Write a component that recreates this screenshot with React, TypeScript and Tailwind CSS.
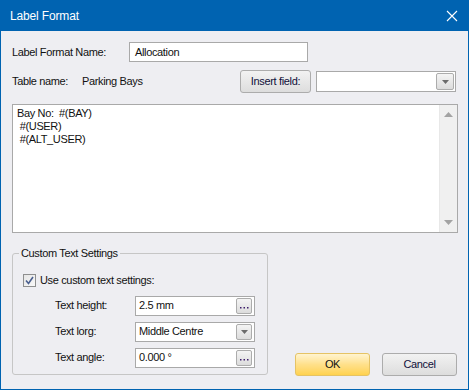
import React from 'react'

const font = { fontFamily: '"Liberation Sans", Arial, sans-serif' }

function CloseIcon() {
  return (
    <svg width="12" height="12" viewBox="0 0 12 12" className="block">
      <path d="M1 1 L11 11 M11 1 L1 11" stroke="#ffffff" strokeWidth="1.1" fill="none" />
    </svg>
  )
}

function DropArrow() {
  return (
    <svg width="7" height="4" viewBox="0 0 7 4" className="block">
      <path d="M0 0 H7 L3.5 4 Z" fill="#6b6b6b" />
    </svg>
  )
}

function SmallButton({ kind }: { kind: 'dots' | 'arrow' }) {
  return (
    <div className="w-[16px] h-[16px] rounded-[2px] border border-[#acacac] bg-gradient-to-b from-[#f4f4f4] to-[#dcdcdc] flex items-center justify-center">
      {kind === 'dots' ? (
        <svg width="9" height="2" viewBox="0 0 9 2" className="block mt-[4px]">
          <rect x="0" y="0" width="1.5" height="1.5" fill="#3d1d6b" />
          <rect x="3.5" y="0" width="1.5" height="1.5" fill="#3d1d6b" />
          <rect x="7" y="0" width="1.5" height="1.5" fill="#3d1d6b" />
        </svg>
      ) : (
        <DropArrow />
      )}
    </div>
  )
}

function Field({ value, kind }: { value: string; kind: 'dots' | 'arrow' }) {
  return (
    <div className="w-[120px] h-[20px] border border-[#a9a9a9] bg-white flex items-center justify-between pl-[3px] pr-[2px]">
      <span>{value}</span>
      <SmallButton kind={kind} />
    </div>
  )
}

function CheckBox() {
  return (
    <div className="w-[13px] h-[13px] border border-[#8e8f8f] bg-gradient-to-br from-[#e6e6e6] to-[#f8f8f8] flex items-center justify-center">
      <svg width="9" height="9" viewBox="0 0 9 9" className="block">
        <path d="M1 4.5 L3.5 7.5 L8 1" stroke="#4a5f8f" strokeWidth="1.6" fill="none" />
      </svg>
    </div>
  )
}

export default function App() {
  const rows = [
    { label: 'Text height:', value: '2.5 mm', kind: 'dots' as const },
    { label: 'Text lorg:', value: 'Middle Centre', kind: 'arrow' as const },
    { label: 'Text angle:', value: '0.000 °', kind: 'dots' as const },
  ]

  return (
    <div
      className="w-[469px] h-[390px] flex flex-col bg-[#0063b1] px-px pb-px text-[11px] tracking-[-0.35px] text-[#111111]"
      style={font}
    >
      {/* title bar */}
      <div className="h-[31px] flex items-center justify-between pl-[9px] pr-[10px] text-white text-[12px] tracking-[-0.15px]">
        <span>Label Format</span>
        <CloseIcon />
      </div>

      {/* body */}
      <div className="flex-1 bg-[#eeeef2] pl-[11px] pr-[10px] pt-[11px] flex flex-col">
        <div className="h-[20px] flex items-center">
          <span className="w-[117px]">Label Format Name:</span>
          <div className="w-[179px] h-[20px] border border-[#a9a9a9] bg-white flex items-center pl-[5px]">
            Allocation
          </div>
        </div>

        <div className="h-[23px] mt-[8px] flex items-center">
          <span className="w-[70px]">Table name:</span>
          <span>Parking Bays</span>
          <div className="flex-1" />
          <div className="w-[71px] h-[23px] rounded-[3px] border border-[#acacac] bg-gradient-to-b from-[#f2f2f2] to-[#dddddd] flex items-center justify-center text-[#10103a]">
            Insert field:
          </div>
          <div className="w-[140px] h-[21px] ml-[5px] mr-[2px] border border-[#a9a9a9] bg-white flex items-center justify-end pr-[1px]">
            <div className="w-[18px] h-[17px] rounded-[2px] border border-[#acacac] bg-gradient-to-b from-[#f4f4f4] to-[#dcdcdc] flex items-center justify-center">
              <DropArrow />
            </div>
          </div>
        </div>

        <div className="h-[129px] mt-[11px] border border-[#a9a9a9] bg-white flex">
          <div className="flex-1 pl-[4px] pt-[2px] leading-[13px]">
            <div>Bay No:&nbsp; #(BAY)</div>
            <div>&nbsp;#(USER)</div>
            <div>&nbsp;#(ALT_USER)</div>
          </div>
          <div className="w-[18px] bg-[#f0f0f0] border-l border-[#e8e8e8] flex flex-col items-center justify-between py-[7px]">
            <svg width="9" height="5" viewBox="0 0 9 5" className="block">
              <path d="M0 5 H9 L4.5 0 Z" fill="#a3a3a3" />
            </svg>
            <svg width="9" height="5" viewBox="0 0 9 5" className="block">
              <path d="M0 0 H9 L4.5 5 Z" fill="#a3a3a3" />
            </svg>
          </div>
        </div>

        <div className="mt-[13px] flex items-end justify-between">
          <fieldset className="w-[256px] h-[129px] border border-[#c6c6c6] rounded-[3px]">
            <legend className="ml-[6px] px-[2px] leading-[14px]">Custom Text Settings</legend>
            <div className="mt-[12px] ml-[10px] flex items-center gap-[4px]">
              <CheckBox />
              <span>Use custom text settings:</span>
            </div>
            <div className="mt-[7px] flex flex-col gap-[6px]">
              {rows.map((r) => (
                <div key={r.label} className="flex items-center">
                  <span className="w-[80px] ml-[42px]">{r.label}</span>
                  <Field value={r.value} kind={r.kind} />
                </div>
              ))}
            </div>
          </fieldset>

          <div className="flex gap-[12px] mb-[-1px] mr-[1px]">
            <div className="w-[75px] h-[23px] rounded-[3px] border border-[#e5c365] bg-gradient-to-b from-[#fff4cf] via-[#ffe08a] to-[#ffd24d] flex items-center justify-center">
              OK
            </div>
            <div className="w-[75px] h-[23px] rounded-[3px] border border-[#acacac] bg-gradient-to-b from-[#f2f2f2] to-[#dddddd] flex items-center justify-center text-[#10103a]">
              Cancel
            </div>
          </div>
        </div>
      </div>
    </div>
  )
}
